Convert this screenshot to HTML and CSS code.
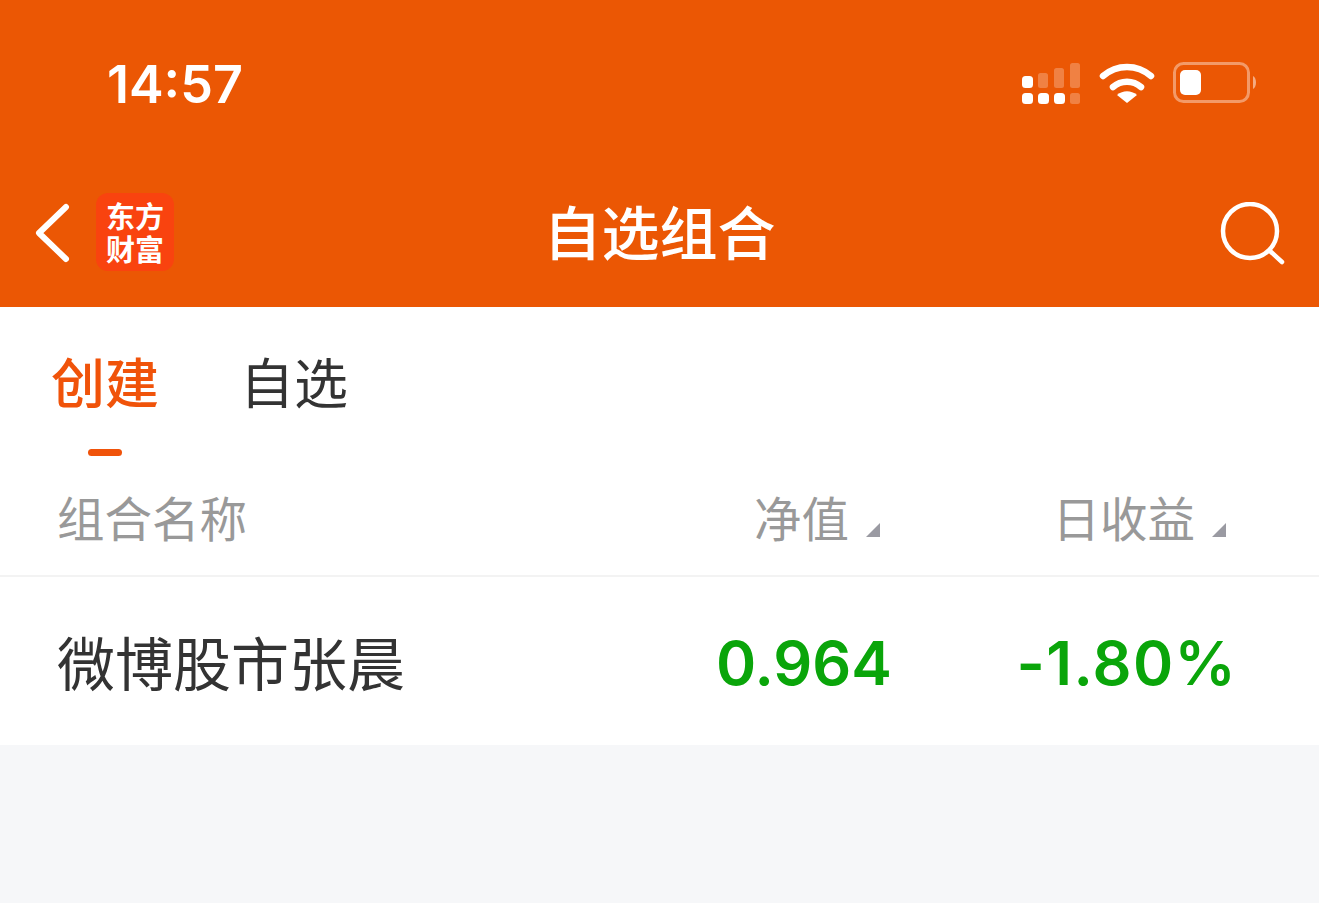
FILE: index.html
```
<!DOCTYPE html>
<html lang="zh-CN">
<head>
<meta charset="utf-8">
<title>自选组合</title>
<link rel="stylesheet" href="styles.css">
</head>
<body>
<header class="top">
  <div class="status">
    <span class="time">14:57</span>
    <div class="status-icons">
      <svg class="signal" width="60" height="44" viewBox="0 0 60 44">
        <g fill="#fff">
          <rect x="1" y="15" width="11" height="12" rx="3.500"/>
          <rect x="1" y="32" width="11" height="11" rx="3.500"/>
          <rect x="17" y="32" width="11" height="11" rx="3.500"/>
          <rect x="33" y="32" width="11" height="11" rx="3.500"/>
        </g>
        <g fill="#fff" opacity=".25">
          <rect x="17" y="12" width="10" height="15" rx="2.500"/>
          <rect x="33" y="7" width="10" height="20" rx="2.500"/>
          <rect x="49" y="2" width="10" height="25" rx="2.500"/>
          <rect x="49" y="32" width="10" height="11" rx="2.500"/>
        </g>
      </svg>
      <svg class="wifi" width="56" height="44" viewBox="0 0 56 44">
        <g fill="none" stroke="#fff" stroke-width="6.500" stroke-linecap="round">
          <path d="M4 15C18 3 38 3 52 15"/>
          <path d="M14 26C22 19 34 19 42 26"/>
        </g>
        <path d="M18 34C24 29 32 29 38 34L28 42Z" fill="#fff"/>
      </svg>
      <svg class="battery" width="86" height="44" viewBox="0 0 86 44">
        <rect x="1.500" y="2.500" width="74" height="38" rx="9" fill="none" stroke="#fff" stroke-opacity=".4" stroke-width="3"/>
        <rect x="7" y="9" width="21" height="25" rx="5" fill="#fff"/>
        <path d="M80 15C84 17 84 26 80 28Z" fill="#fff" fill-opacity=".5"/>
      </svg>
    </div>
  </div>
  <nav class="nav">
    <div class="nav-left">
      <svg class="back" width="36" height="60" viewBox="0 0 36 60"><path d="M32 4 5 30 32 56" fill="none" stroke="#fff" stroke-width="6" stroke-linecap="round" stroke-linejoin="round"/></svg>
      <div class="logo"><span class="logo-text">东方财富</span></div>
    </div>
    <h1 class="title">自选组合</h1>
    <svg class="search" width="66" height="64" viewBox="0 0 66 64"><circle cx="31" cy="29" r="27" fill="none" stroke="#fff" stroke-width="4.500"/><path d="M51 49 63 60" fill="none" stroke="#fff" stroke-width="4.500" stroke-linecap="round"/></svg>
  </nav>
</header>
<main class="panel">
  <div class="tabs">
    <div class="tab active">创建</div>
    <div class="tab">自选</div>
  </div>
  <div class="row head">
    <span class="name">组合名称</span>
    <span class="nav-val">净值<i class="tri"></i></span>
    <span class="day">日收益<i class="tri"></i></span>
  </div>
  <div class="row item">
    <span class="name">微博股市张晨</span>
    <span class="nav-val num">0.964</span>
    <span class="day num">-1.80%</span>
  </div>
</main>
</body>
</html>
```
FILE: styles.css
```
* { box-sizing: border-box; }
html, body { margin: 0; height: 100%; }
body {
  background: #f6f7f9;
  font-family: "Noto Sans CJK SC", "Liberation Sans", sans-serif;
  overflow: hidden;
}
.top { background: #eb5704; height: 307px; color: #fff; padding-top: 52px; }
.status {
  height: 62px;
  display: flex;
  justify-content: space-between;
  align-items: center;
  padding: 0 60px 0 107px;
}
.time { margin-top: 3px; font: 600 52px/62px Inter, "Liberation Sans", sans-serif; }
.status-icons { display: flex; align-items: center; gap: 18px; }
.nav {
  margin-top: 78px;
  height: 80px;
  display: grid;
  grid-template-columns: 1fr auto 1fr;
  align-items: center;
  padding: 0 34px;
}
.nav-left { display: flex; align-items: center; gap: 26px; }
.back { margin-top: 2px; }
.logo {
  width: 78px;
  height: 78px;
  border-radius: 12px;
  background: #f9430f;
  display: flex;
  align-items: center;
  justify-content: center;
}
.logo-text {
  width: 58px;
  text-align: center;
  font-size: 29px;
  line-height: 33px;
  font-weight: 600;
}
.title { margin: -4px 0 0; font-size: 58px; line-height: 80px; font-weight: 500; }
.search { justify-self: end; margin-top: 4px; }
.panel { background: #fff; height: 438px; }
.tabs { display: flex; gap: 81px; padding: 41px 0 0 51px; height: 151px; }
.tab { position: relative; font-size: 54px; line-height: 66px; color: #333; }
.tab.active { color: #f0530a; font-weight: 500; }
.tab.active::after {
  content: "";
  position: absolute;
  left: 37px;
  top: 101px;
  width: 34px;
  height: 7px;
  border-radius: 4px;
  background: #f0530a;
}
.row { display: flex; align-items: center; padding-left: 57px; }
.name { flex: 1; }
.nav-val { text-align: right; }
.day { text-align: right; }
.head {
  height: 119px;
  padding-right: 93px;
  font-size: 47.500px;
  color: #999;
  border-bottom: 2px solid #f3f3f3;
}
.head .day { width: 346px; }
.tri {
  display: inline-block;
  width: 14px;
  height: 14px;
  margin-left: 17px;
  background: #9a9aa2;
  clip-path: polygon(100% 0, 100% 100%, 0 100%);
}
.item { height: 168px; padding-right: 82px; font-size: 58px; color: #333; }
.item .day { width: 345px; letter-spacing: 1.300px; }
.num {
  margin-top: 3px;
  font-family: Inter, "Liberation Sans", sans-serif;
  font-size: 61px;
  font-weight: 600;
  color: #0aa50a;
}
```
